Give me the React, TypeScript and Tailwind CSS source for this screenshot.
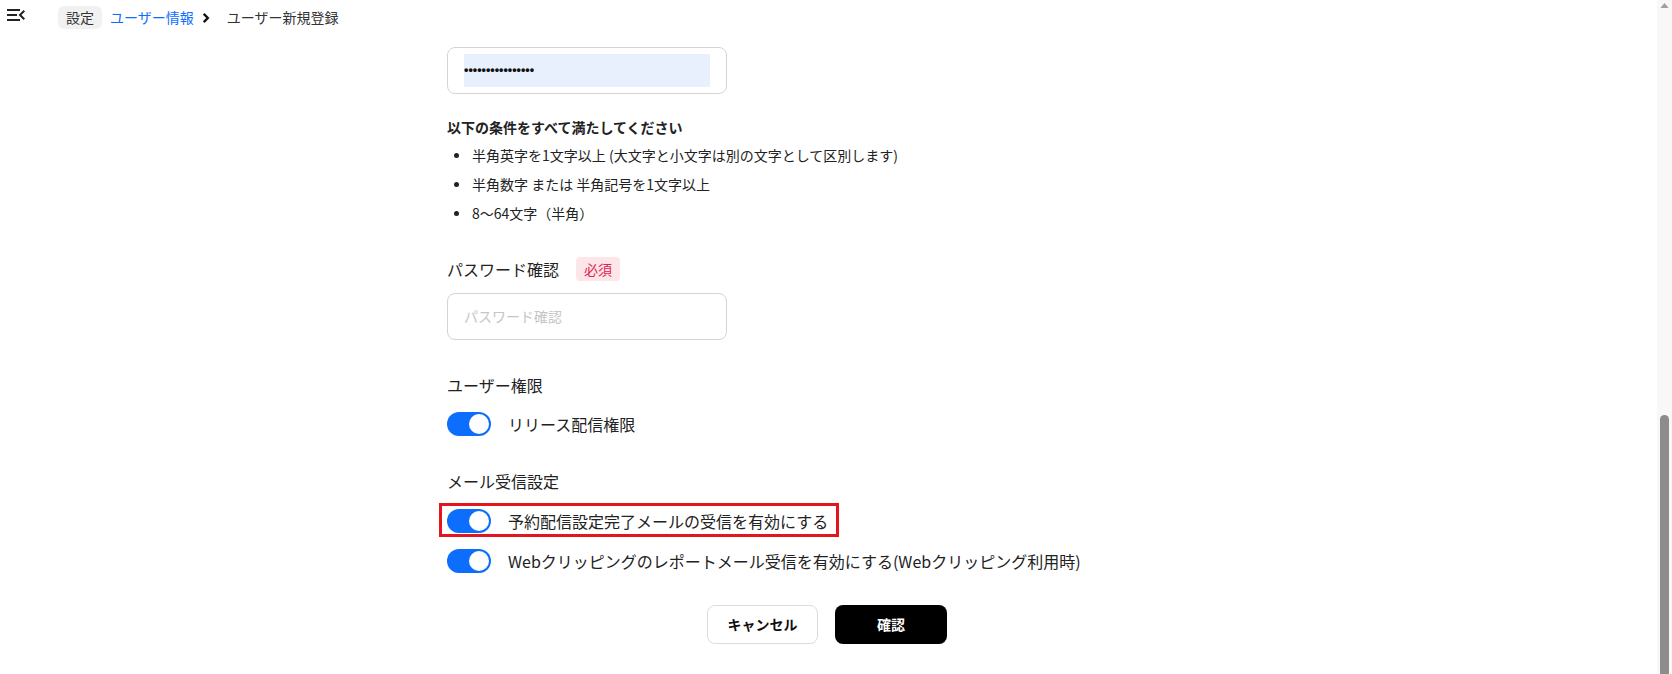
import React from "react";

const Toggle = () => (
  <div className="flex h-[24px] w-[44px] shrink-0 items-center justify-end rounded-full bg-[#0d6efd] p-[2px]">
    <div className="h-[20px] w-[20px] rounded-full bg-white" />
  </div>
);

const ToggleRow = ({ label, marked }: { label: string; marked?: boolean }) => (
  <div className="relative inline-flex h-[24px] items-center gap-[17px] self-start">
    <Toggle />
    <span className="text-[16px] leading-[24px] text-[#222]">{label}</span>
    {/* annotation box */}
    {marked && (
      <div className="pointer-events-none absolute -top-[6px] -bottom-[4px] -left-[8px] -right-[11px] border-[3px] border-[#e3161d]" />
    )}
  </div>
);

const rules = [
  "半角英字を1文字以上 (大文字と小文字は別の文字として区別します)",
  "半角数字 または 半角記号を1文字以上",
  "8〜64文字（半角）",
];

export default function App() {
  return (
    <div className="flex h-[674px] w-full overflow-hidden bg-white font-['Noto_Sans_CJK_JP',sans-serif] text-[#222]">
      <div className="flex min-w-0 flex-1 flex-col">
        {/* Header / breadcrumb */}
        <div className="flex h-[35px] items-start">
          <svg
            viewBox="0 0 24 24"
            className="ml-[4px] mt-[3px] h-[24px] w-[24px] fill-[#222]"
          >
            <path d="M3 18h13v-2H3v2zm0-5h10v-2H3v2zm0-7v2h13V6H3zm18 9.59L17.42 12 21 8.41 19.59 7l-5 5 5 5L21 15.59z" />
          </svg>
          <div className="ml-[30px] mt-[6px] flex h-[23px] items-center text-[14px]">
            <span className="flex h-[23px] items-center rounded-md bg-[#f1f1f1] px-[8px] text-[#333]">
              設定
            </span>
            <span className="ml-[8px] text-[#0d6efd]">ユーザー情報</span>
            <svg
              viewBox="0 0 8 11"
              className="ml-[8px] h-[10px] w-[8px]"
              fill="none"
              stroke="#111"
              strokeWidth="2.6"
            >
              <path d="M1.5 1 L6 5.5 L1.5 10" />
            </svg>
            <span className="ml-[17px] text-[#333]">ユーザー新規登録</span>
          </div>
        </div>

        {/* Form */}
        <div className="mx-auto flex w-[763px] flex-col pt-[12px]">
          <div className="flex h-[47px] w-[280px] items-center rounded-lg border border-[#d4d4d4] px-[16px]">
            <div className="flex h-[33px] flex-1 items-center bg-[#e8f0fe] font-['Liberation_Sans',sans-serif] text-[12.5px] font-bold text-[#111]">
              ••••••••••••••••
            </div>
          </div>

          <p className="mt-[23px] text-[14px] font-bold leading-[20px]">
            以下の条件をすべて満たしてください
          </p>
          <ul className="mt-[8px] flex flex-col gap-[9px]">
            {rules.map((r) => (
              <li key={r} className="flex items-center text-[14px] leading-[20px]">
                <span className="ml-[7px] mr-[13px] h-[5px] w-[5px] rounded-full bg-[#222]" />
                {r}
              </li>
            ))}
          </ul>

          <div className="mt-[34px] flex h-[24px] items-center gap-[17px]">
            <span className="text-[16px] leading-[24px]">パスワード確認</span>
            <span className="flex h-[24px] items-center rounded bg-[#fde6e9] px-[8px] text-[14px] text-[#e0244f]">
              必須
            </span>
          </div>
          <div className="mt-[12px] flex h-[47px] w-[280px] items-center rounded-lg border border-[#d4d4d4] px-[16px]">
            <span className="text-[14px] text-[#c6c6c6]">パスワード確認</span>
          </div>

          <p className="mt-[33px] text-[16px] leading-[24px]">ユーザー権限</p>
          <div className="mt-[15px] flex">
            <ToggleRow label="リリース配信権限" />
          </div>

          <p className="mt-[33px] text-[16px] leading-[24px]">メール受信設定</p>
          <div className="mt-[16px] flex flex-col gap-[16px]">
            <ToggleRow label="予約配信設定完了メールの受信を有効にする" marked />
            <ToggleRow label="Webクリッピングのレポートメール受信を有効にする(Webクリッピング利用時)" />
          </div>
        </div>

        <div className="mt-[32px] flex justify-center gap-[17px] pr-[3px]">
          <button className="h-[39px] w-[111px] rounded-lg border border-[#dcdcdc] bg-white text-[14px] font-bold text-[#111]">
            キャンセル
          </button>
          <button className="h-[39px] w-[112px] rounded-lg bg-black text-[14px] font-bold text-white">
            確認
          </button>
        </div>
      </div>

      {/* Scrollbar */}
      <div className="flex w-[15px] shrink-0 flex-col items-center bg-[#f8f8f8]">
        <svg viewBox="0 0 10 6" className="mt-[3px] h-[5px] w-[9px] fill-[#a0a0a0]">
          <path d="M5 0 L10 6 L0 6 Z" />
        </svg>
        <div className="mt-auto h-[259px] w-[9px] rounded-t-full bg-[#8c8c8c]" />
      </div>
    </div>
  );
}
